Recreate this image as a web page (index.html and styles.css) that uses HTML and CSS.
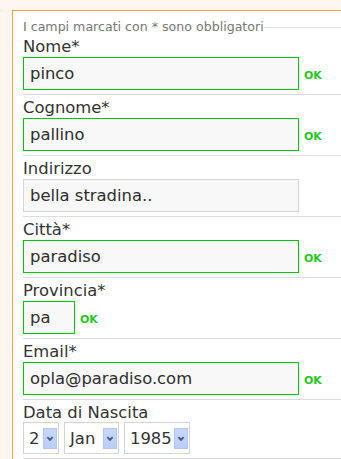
FILE: index.html
```html
<!DOCTYPE html>
<html lang="it">
<head>
<meta charset="utf-8">
<title>Registrazione</title>
<link rel="stylesheet" href="styles.css">
</head>
<body>
<form class="form">
  <div class="legend">
    <span class="legend-text">I campi marcati con * sono obbligatori</span>
    <span class="legend-line"></span>
  </div>

  <div class="row">
    <label class="label">Nome*</label>
    <div class="field">
      <input class="input input-full valid" value="pinco">
      <span class="ok">OK</span>
    </div>
  </div>

  <div class="row">
    <label class="label">Cognome*</label>
    <div class="field">
      <input class="input input-full valid" value="pallino">
      <span class="ok">OK</span>
    </div>
  </div>

  <div class="row">
    <label class="label">Indirizzo</label>
    <div class="field">
      <input class="input input-full" value="bella stradina..">
    </div>
  </div>

  <div class="row">
    <label class="label">Città*</label>
    <div class="field">
      <input class="input input-full valid" value="paradiso">
      <span class="ok">OK</span>
    </div>
  </div>

  <div class="row">
    <label class="label">Provincia*</label>
    <div class="field">
      <input class="input input-short valid" value="pa">
      <span class="ok">OK</span>
    </div>
  </div>

  <div class="row">
    <label class="label">Email*</label>
    <div class="field">
      <input class="input input-full valid" value="opla@paradiso.com">
      <span class="ok">OK</span>
    </div>
  </div>

  <div class="row">
    <label class="label label-date">Data di Nascita</label>
    <div class="selects">
      <div class="select select-day">
        <span class="select-value">2</span>
        <span class="select-btn"><svg width="14" height="21" viewBox="0 0 14 21"><path d="M4.4 9.2 L7 11.8 L9.6 9.2" fill="none" stroke="#46587c" stroke-width="1.9"/></svg></span>
      </div>
      <div class="select select-month">
        <span class="select-value">Jan</span>
        <span class="select-btn"><svg width="14" height="21" viewBox="0 0 14 21"><path d="M4.4 9.2 L7 11.8 L9.6 9.2" fill="none" stroke="#46587c" stroke-width="1.9"/></svg></span>
      </div>
      <div class="select select-year">
        <span class="select-value">1985</span>
        <span class="select-btn"><svg width="14" height="21" viewBox="0 0 14 21"><path d="M4.4 9.2 L7 11.8 L9.6 9.2" fill="none" stroke="#46587c" stroke-width="1.9"/></svg></span>
      </div>
    </div>
  </div>
</form>
</body>
</html>
```

FILE: styles.css
```css
html, body {
  margin: 0;
  padding: 0;
  overflow: hidden;
}

body {
  background: #fef7ef;
  font-family: "DejaVu Sans", Verdana, sans-serif;
  color: #333;
}

.form {
  margin: 10px 0 0 12px;
  width: 400px;
  border: 1px solid #f5a244;
  border-right: none;
  background: #ffffff;
  padding: 9px 0 40px 10px;
}

.legend {
  display: flex;
  align-items: center;
  height: 14px;
}

.legend-text {
  font-size: 12.6px;
  line-height: 14px;
  color: #777;
  white-space: nowrap;
}

.legend-line {
  flex: 1;
  height: 1px;
  background: #dcdcdc;
}

.row {
  border-bottom: 1px solid #dcdcdc;
  padding-bottom: 4px;
}

.label {
  display: block;
  font-size: 16.4px;
  line-height: 16px;
  margin: 5px 0 2px;
  color: #333;
}

.label-date {
  margin-bottom: 1px;
}

.field {
  display: flex;
  align-items: baseline;
}

.input {
  box-sizing: border-box;
  height: 33px;
  margin: 0;
  padding: 0 6px;
  border: 1px solid #d6d6d6;
  background: #f8f8f8;
  font-family: "DejaVu Sans", Verdana, sans-serif;
  font-size: 16.4px;
  color: #2e2e2e;
  outline: none;
}

.input-full {
  width: 276px;
}

.input-short {
  width: 52px;
}

.valid {
  border-color: #00c600;
}

.ok {
  margin-left: 5px;
  font-size: 11px;
  font-weight: bold;
  color: #1ec81e;
}

.selects {
  display: flex;
  gap: 5px;
}

.select {
  box-sizing: border-box;
  display: flex;
  align-items: center;
  justify-content: space-between;
  height: 32px;
  padding: 0 1px 0 5px;
  border: 1px solid #d4d4d4;
  background: #fff;
  font-size: 16.4px;
  color: #333;
}

.select-day {
  width: 36px;
}

.select-month {
  width: 55px;
}

.select-year {
  width: 66px;
}

.select-btn {
  display: block;
  width: 14px;
  height: 21px;
  background: linear-gradient(#c9d8fc, #b9cdf9);
  box-shadow: inset 0 0 0 1px #b2c6f2;
}

.select-btn svg {
  display: block;
}
```
